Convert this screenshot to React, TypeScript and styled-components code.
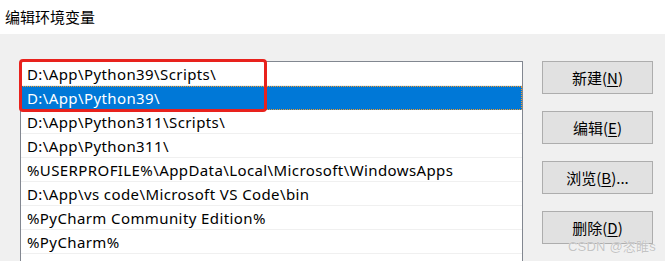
import React from "react";
import styled, { createGlobalStyle } from "styled-components";

const Global = createGlobalStyle`
  html, body { margin: 0; padding: 0; background: #f0f0f0; overflow: hidden; }
  body { font-family: "Noto Sans", "Noto Sans CJK SC", sans-serif; }
`;

const Window = styled.div`
  width: 665px;
  height: 261px;
  display: flex;
  flex-direction: column;
  background: #f0f0f0;
  position: relative;
  overflow: hidden;
`;

const TitleBar = styled.div`
  flex-shrink: 0;
  height: 34px;
  background: #ffffff;
  display: flex;
  align-items: center;
  padding-left: 5px;
  font-family: "Noto Sans CJK SC", sans-serif;
  font-size: 15px;
  color: #000;
  box-sizing: border-box;
  padding-bottom: 1px;
`;

const Body = styled.div`
  flex: 1;
  min-height: 0;
  display: flex;
  align-items: flex-start;
  padding: 27px 0 0 20px;
  gap: 19px;
`;

const ListBox = styled.div`
  position: relative;
  flex-shrink: 0;
  width: 503px;
  height: 240px;
  box-sizing: border-box;
  border: 1px solid #828790;
  border-bottom: none;
  background: #ffffff;
  display: flex;
  flex-direction: column;
`;

const Row = styled.div<{ $selected?: boolean }>`
  flex-shrink: 0;
  height: 24px;
  box-sizing: border-box;
  padding: 1px 0 0 6px;
  line-height: 22px;
  font-size: 15px;
  letter-spacing: 0.4px;
  font-family: "Noto Sans", "Noto Sans CJK SC", sans-serif;
  white-space: nowrap;
  color: ${(p) => (p.$selected ? "#ffffff" : "#000000")};
  background: ${(p) => (p.$selected ? "#0078d7" : "#ffffff")};
  border-bottom: 1px solid ${(p) => (p.$selected ? "#0078d7" : "#f0f0f0")};
  outline: ${(p) => (p.$selected ? "1px dotted #f39a2c" : "none")};
  outline-offset: -1px;
`;

const Highlight = styled.div`
  position: absolute;
  left: -2px;
  top: -3px;
  width: 248px;
  height: 53px;
  box-sizing: border-box;
  border: 3px solid #e8221d;
  border-radius: 4px;
  pointer-events: none;
`;

const Buttons = styled.div`
  display: flex;
  flex-direction: column;
  gap: 17px;
`;

const Button = styled.div`
  width: 111px;
  height: 33px;
  box-sizing: border-box;
  background: #e1e1e1;
  border: 1px solid #adadad;
  display: flex;
  align-items: center;
  justify-content: center;
  font-family: "Noto Sans CJK SC", sans-serif;
  font-size: 15px;
  color: #000;
  padding-bottom: 1px;
`;

const Key = styled.span`
  text-decoration: underline;
  text-underline-offset: 2px;
`;

const Watermark = styled.div`
  position: absolute;
  left: 568px;
  top: 236px;
  font-family: "Liberation Sans", "Noto Sans CJK SC", sans-serif;
  font-size: 13px;
  color: #c4c4c4;
  text-shadow: 0 0 1px #ffffff;
  letter-spacing: 0.2px;
`;

const rows = [
  "D:\\App\\Python39\\Scripts\\",
  "D:\\App\\Python39\\",
  "D:\\App\\Python311\\Scripts\\",
  "D:\\App\\Python311\\",
  "%USERPROFILE%\\AppData\\Local\\Microsoft\\WindowsApps",
  "D:\\App\\vs code\\Microsoft VS Code\\bin",
  "%PyCharm Community Edition%",
  "%PyCharm%",
  "",
];

const buttons: [string, string, string][] = [
  ["新建(", "N", ")"],
  ["编辑(", "E", ")"],
  ["浏览(", "B", ")..."],
  ["删除(", "D", ")"],
];

export default function App() {
  return (
    <Window>
      <Global />
      <TitleBar>编辑环境变量</TitleBar>
      <Body>
        <ListBox>
          {rows.map((r, i) => (
            <Row key={i} $selected={i === 1}>
              {r}
            </Row>
          ))}
          <Highlight />
        </ListBox>
        <Buttons>
          {buttons.map(([a, k, b]) => (
            <Button key={k}>
              {a}
              <Key>{k}</Key>
              {b}
            </Button>
          ))}
        </Buttons>
      </Body>
      <Watermark>CSDN @恣睢s</Watermark>
    </Window>
  );
}
